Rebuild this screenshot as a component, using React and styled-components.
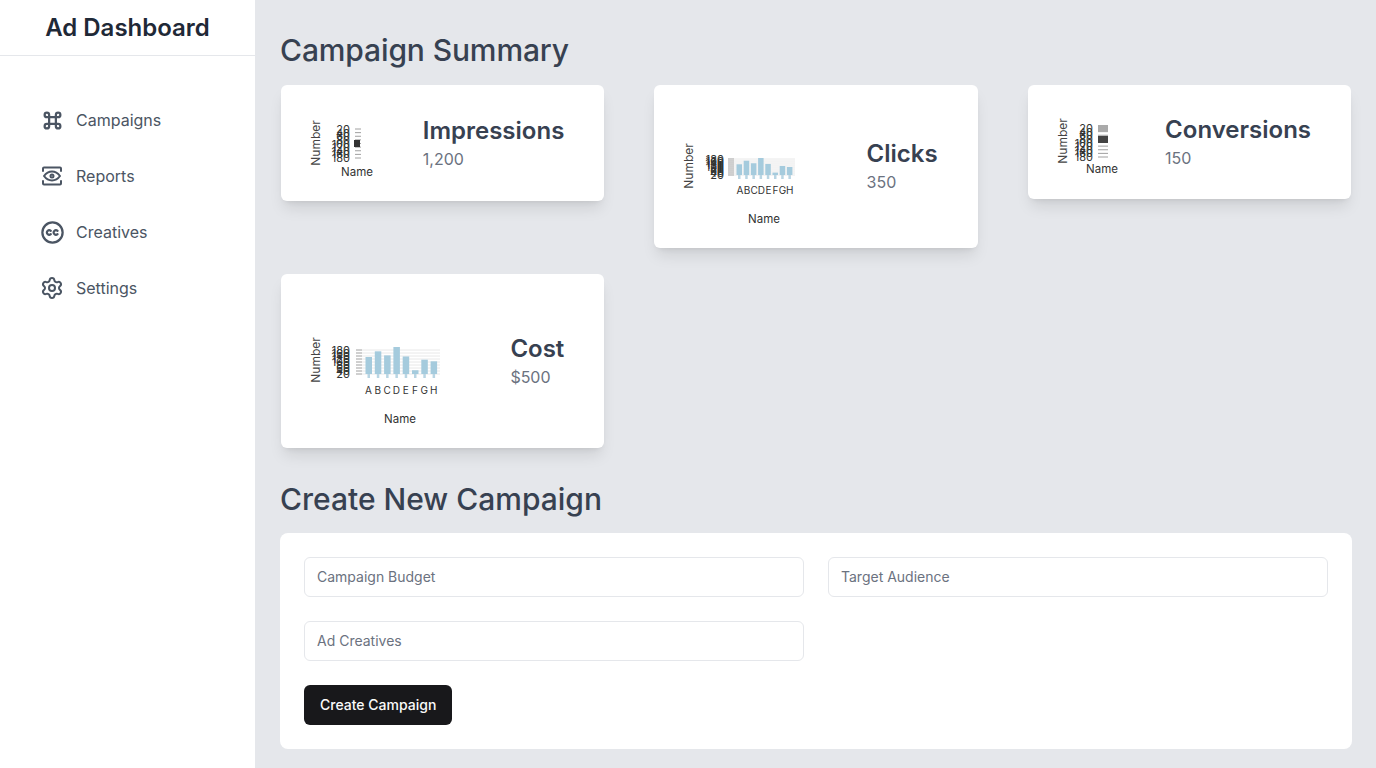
import React from 'react'
import styled, { createGlobalStyle } from 'styled-components'
import { TbCommand, TbCreativeCommons } from 'react-icons/tb'
import { Settings } from 'lucide-react'

const GlobalStyle = createGlobalStyle`
  * { box-sizing: border-box; }
  body {
    margin: 0;
    font-family: Inter, "Liberation Sans", sans-serif;
    background: #e5e7eb;
  }
`

const Page = styled.div`
  display: flex;
  min-height: 768px;
`

const Sidebar = styled.aside`
  width: 255px;
  flex: none;
  background: #fff;
`

const Brand = styled.div`
  height: 56px;
  border-bottom: 1px solid #e5e7eb;
  display: flex;
  justify-content: center;
  font-size: 24px;
  line-height: 32px;
  padding-top: 12px;
  font-weight: 600;
  color: #1f2937;
`

const Nav = styled.nav`
  display: flex;
  flex-direction: column;
  gap: 16px;
  padding: 44px 38px 0;
`

const NavItem = styled.a`
  display: flex;
  align-items: center;
  gap: 10px;
  height: 40px;
  font-size: 16px;
  color: #4b5563;
`

const NavIcon = styled.span`
  display: flex;
  align-items: center;
  justify-content: center;
  width: 28px;
  height: 28px;
  flex: none;
`

const Main = styled.main`
  flex: 1;
  min-width: 0;
  padding: 32px 24px 19px 25px;
`

const Heading = styled.h2`
  margin: ${p => (p.$spaced ? '33px' : '0')} 0 16px;
  font-size: 30px;
  line-height: 36px;
  font-weight: 500;
  letter-spacing: ${p => (p.$spaced ? '0' : '-0.12px')};
  color: #374151;
`

const CardGrid = styled.section`
  display: grid;
  grid-template-columns: repeat(3, 1fr);
  column-gap: 50px;
  row-gap: 26.45px;
  align-items: start;
  padding: 1px 1px 0;
`

const Card = styled.article`
  display: flex;
  justify-content: space-between;
  align-items: center;
  padding: 24px 40px 24px 23px;
  background: #fff;
  border-radius: 6px;
  box-shadow: 0 10px 15px -3px rgba(0, 0, 0, 0.1), 0 4px 6px -4px rgba(0, 0, 0, 0.1);
`

const ChartSvg = styled.svg`
  display: block;
  flex: none;
  overflow: visible;
  font-family: Inter, "Liberation Sans", sans-serif;
`

const Stat = styled.div`
  flex: none;
`

const StatTitle = styled.h3`
  margin: 0;
  font-size: 24px;
  line-height: 32px;
  font-weight: 600;
  color: #374151;
`

const StatValue = styled.p`
  margin: 0;
  font-size: 16px;
  line-height: 24px;
  color: #6b7280;
`

const FormCard = styled.form`
  display: flex;
  flex-direction: column;
  gap: 24px;
  padding: 24px;
  background: #fff;
  border-radius: 8px;
`

const FieldGrid = styled.div`
  display: grid;
  grid-template-columns: repeat(2, 1fr);
  gap: 24px;
`

const Field = styled.input`
  height: 40px;
  width: 100%;
  padding: 0 12px 2px;
  border: 1px solid #e5e7eb;
  border-radius: 6px;
  background: #fff;
  font: 14px Inter, "Liberation Sans", sans-serif;
  color: #111827;

  &::placeholder {
    color: #6b7280;
    opacity: 1;
  }
`

const SubmitButton = styled.button`
  align-self: flex-start;
  height: 40px;
  padding: 0 16px 2px;
  border: 0;
  border-radius: 6px;
  background: #18181b;
  color: #fafafa;
  font: 500 14px Inter, "Liberation Sans", sans-serif;
`

const EyeFrameIcon = () => (
  <svg width="24" height="24" viewBox="0 0 24 24" fill="none" stroke="currentColor" strokeWidth="2" strokeLinecap="round" strokeLinejoin="round">
    <path d="M3 7V4.500a1 1 0 0 1 1-1h16a1 1 0 0 1 1 1V7" />
    <path d="M3 17v2.500a1 1 0 0 0 1 1h16a1 1 0 0 0 1-1V17" />
    <path d="M4 12c2.200-3 4.900-4.500 8-4.500s5.800 1.500 8 4.500c-2.200 3-4.900 4.500-8 4.500s-5.800-1.500-8-4.500z" />
    <circle cx="12" cy="12" r="1.500" />
  </svg>
)

const LETTERS = ['A', 'B', 'C', 'D', 'E', 'F', 'G', 'H']
const TICKS = [20, 40, 60, 80, 100, 120, 140, 160, 180]
const BAR_VALUES = [0.63, 0.84, 0.69, 1, 0.65, 0.14, 0.53, 0.47]

const Chart = ({ width, height, number, name, axis, grid, bars, letters, blobs }) => {
  const step = (axis.bottom - axis.top) / (TICKS.length - 1)
  const rows = TICKS.map((_, i) => axis.top + i * step)
  const labels = axis.inverted ? TICKS : [...TICKS].reverse()

  return (
    <ChartSvg width={width} height={height} viewBox={`0 0 ${width} ${height}`}>
      <text
        x={number.x}
        y={number.y}
        fontSize="12"
        fill="#444"
        textAnchor="middle"
        dominantBaseline="central"
        transform={`rotate(-90 ${number.x} ${number.y})`}
      >
        Number
      </text>
      {grid && (
        <g>
          {rows.map(y => (
            <line key={y} x1={axis.tickX + axis.tickLen} x2={grid.right} y1={y} y2={y} stroke="#e8e8e8" />
          ))}
        </g>
      )}
      {rows.map(y => (
        <line key={y} x1={axis.tickX} x2={axis.tickX + axis.tickLen} y1={y} y2={y} stroke="#888" strokeWidth="0.8" />
      ))}
      {labels.map((label, i) => (
        <text key={label} x={axis.labelX} y={rows[i]} fontSize="11" fill="#333" textAnchor="end" dominantBaseline="central">
          {label}
        </text>
      ))}
      {bars &&
        BAR_VALUES.map((v, i) => {
          const x = bars.x + i * bars.step
          const h = v * (bars.bottom - bars.top)
          return (
            <g key={LETTERS[i]}>
              <line x1={x + bars.width / 2} x2={x + bars.width / 2} y1={bars.bottom} y2={bars.bottom + 4} stroke="#b9d5e3" strokeWidth="2.500" />
              <rect x={x} y={bars.bottom - h} width={bars.width} height={h} fill="#a5cbdd" />
            </g>
          )
        })}
      {letters &&
        LETTERS.map((l, i) => (
          <text key={l} x={letters.x + i * letters.step} y={letters.y} fontSize="10" fill="#333" textAnchor="middle" dominantBaseline="central">
            {l}
          </text>
        ))}
      {blobs &&
        blobs.map(b => <rect key={b.y} x={b.x} y={b.y} width={b.w} height={b.h} fill={b.fill} />)}
      <text x={name.x} y={name.y} fontSize="11.500" fill="#333" textAnchor="middle" dominantBaseline="central">
        Name
      </text>
    </ChartSvg>
  )
}

const cards = [
  {
    title: 'Impressions',
    value: '1,200',
    chart: {
      width: 80,
      height: 68,
      number: { x: 11, y: 34 },
      name: { x: 53, y: 63 },
      axis: { top: 20, bottom: 49, tickX: 51, tickLen: 6, labelX: 46, inverted: true },
      blobs: [{ x: 50, y: 31, w: 6, h: 7, fill: '#333' }],
    },
  },
  {
    title: 'Clicks',
    value: '350',
    chart: {
      width: 130,
      height: 114.6,
      number: { x: 11.500, y: 57 },
      name: { x: 87, y: 110 },
      axis: { top: 50, bottom: 66, tickX: 51, tickLen: 6, labelX: 47 },
      grid: { right: 118 },
      bars: { x: 59.500, step: 7.200, width: 5.500, top: 49, bottom: 66 },
      letters: { x: 63, step: 7.100, y: 81 },
    },
  },
  {
    title: 'Conversions',
    value: '150',
    chart: {
      width: 80,
      height: 66,
      number: { x: 11, y: 32 },
      name: { x: 51, y: 60 },
      axis: { top: 19, bottom: 48, tickX: 47, tickLen: 10, labelX: 42, inverted: true },
      blobs: [
        { x: 47, y: 16, w: 10, h: 6, fill: '#aaa' },
        { x: 47, y: 27, w: 10, h: 7, fill: '#444' },
      ],
    },
  },
  {
    title: 'Cost',
    value: '$500',
    chart: {
      width: 140,
      height: 126,
      number: { x: 11, y: 62 },
      name: { x: 96, y: 121 },
      axis: { top: 52, bottom: 76, tickX: 52, tickLen: 6, labelX: 46 },
      grid: { right: 136 },
      bars: { x: 61.500, step: 9.300, width: 6.500, top: 49, bottom: 76 },
      letters: { x: 64.500, step: 9.300, y: 92 },
    },
  },
]

const navItems = [
  { label: 'Campaigns', icon: <TbCommand size={27} /> },
  { label: 'Reports', icon: <EyeFrameIcon /> },
  { label: 'Creatives', icon: <TbCreativeCommons size={27} /> },
  { label: 'Settings', icon: <Settings size={24} strokeWidth={2} /> },
]

export default function App() {
  return (
    <Page>
      <GlobalStyle />
      <Sidebar>
        <Brand>Ad Dashboard</Brand>
        <Nav>
          {navItems.map(item => (
            <NavItem key={item.label}>
              <NavIcon>{item.icon}</NavIcon>
              {item.label}
            </NavItem>
          ))}
        </Nav>
      </Sidebar>
      <Main>
        <Heading>Campaign Summary</Heading>
        <CardGrid>
          {cards.map(card => (
            <Card key={card.title}>
              <Chart {...card.chart} />
              <Stat>
                <StatTitle>{card.title}</StatTitle>
                <StatValue>{card.value}</StatValue>
              </Stat>
            </Card>
          ))}
        </CardGrid>
        <Heading $spaced>Create New Campaign</Heading>
        <FormCard>
          <FieldGrid>
            <Field placeholder="Campaign Budget" />
            <Field placeholder="Target Audience" />
            <Field placeholder="Ad Creatives" />
          </FieldGrid>
          <SubmitButton type="button">Create Campaign</SubmitButton>
        </FormCard>
      </Main>
    </Page>
  )
}
